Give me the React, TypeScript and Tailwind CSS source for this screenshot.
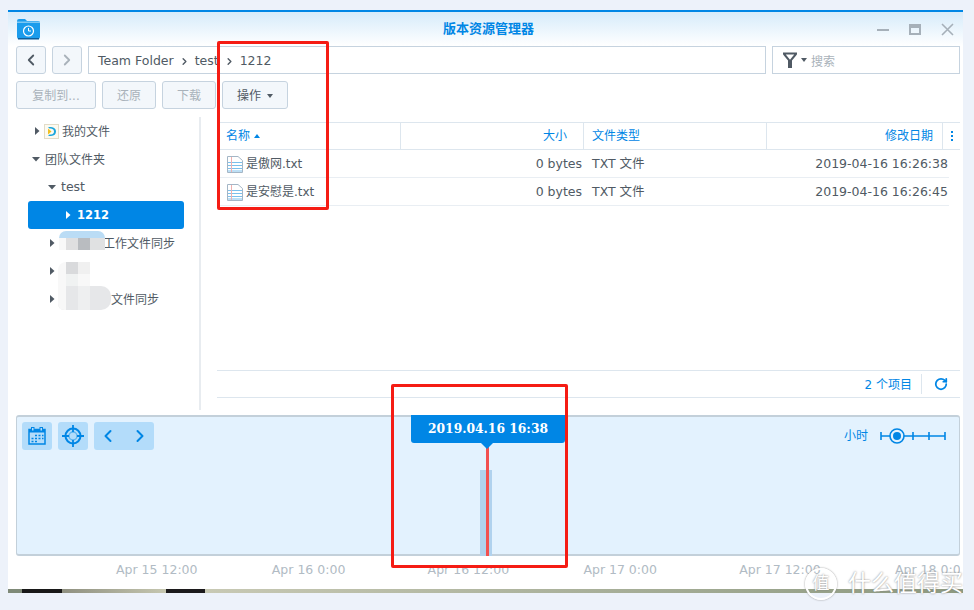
import { ChevronLeft, ChevronRight, RotateCw } from "lucide-react";

const cjk = "font-['DejaVu_Sans','Noto_Sans_CJK_SC',sans-serif]";

function Caret({ dir, white }: { dir: "right" | "down"; white?: boolean }) {
    const color = white ? "#ffffff" : "#505a64";
    return (
        <svg width="8" height="10" viewBox="0 0 8 10" className="shrink-0">
            {dir === "right" ? <path d="M2 1 L6.5 5 L2 9 Z" fill={color} /> : <path d="M0 3 L8 3 L4 7.5 Z" fill={color} />}
        </svg>
    );
}

function TreeRow({ indent, caret, label, selected }: { indent: string; caret: "right" | "down"; label?: React.ReactNode; selected?: boolean }) {
    return (
        <div className={`h-7 flex items-center gap-[5px] rounded-[3px] ml-5 mr-[15px] ${indent} ${selected ? "bg-[#0086e5] text-white font-bold text-[11.5px]" : "text-[#505a64] text-[12px]"}`}>
            <Caret dir={caret} white={selected} />
            {label}
        </div>
    );
}

function TxtIcon() {
    return (
        <svg width="16" height="17" viewBox="0 0 16 17" className="shrink-0">
            <path d="M0.5 0.5 H11 L15.5 4.5 V16.5 H0.5 Z" fill="#ffffff" stroke="#a4b6c6" />
            <path d="M1 6.5 H15 M1 9.5 H15 M1 12.5 H15 M1 15 H15" stroke="#7cc0ec" />
            <path d="M4.5 1 V16" stroke="#efb0b0" />
        </svg>
    );
}

function FileRow({ name, date }: { name: string; date: string }) {
    return (
        <div className="h-7 mr-[11px] pt-px flex items-center border-b border-[#e9eef3] text-[12.5px] text-[#505a64]">
            <div className="w-[184px] pl-[10px] flex items-center gap-[3px] text-[12px]">
                <TxtIcon />
                {name}
            </div>
            <div className="w-[181px] text-right">0 bytes</div>
            <div className="w-[176px] pl-[10px]">TXT 文件</div>
            <div className="flex-1 text-right pr-px">{date}</div>
        </div>
    );
}

function ToolBtn({ label, width, on }: { label: string; width: string; on?: boolean }) {
    return (
        <button className={`h-7 pt-px rounded-[3px] border border-[#c6d3df] bg-[#f3f7fb] text-[12px] ${width} ${on ? "text-[#505a64]" : "text-[#a9b2ba]"}`}>
            {label}
            {on && <span className="inline-block ml-[6px] align-middle border-x-[3.5px] border-t-[4px] border-x-transparent border-t-[#505a64]" />}
        </button>
    );
}

function Cell({ className }: { className: string }) {
    return <div className={`absolute ${className}`} />;
}

const axis = ["Apr 15 12:00", "Apr 16 0:00", "Apr 16 12:00", "Apr 17 0:00", "Apr 17 12:00", "Apr 18 0:00"];

export default function App() {
    return (
        <div className={`relative w-[974px] h-[610px] overflow-hidden bg-[#edf2fa] pt-[10px] pl-[8px] ${cjk}`}>
            <div className="w-[955px] h-[579px] bg-white border-t-2 border-[#0086e5] flex flex-col">
                {/* title bar */}
                <div className="h-[34px] shrink-0 -mb-[34px] bg-gradient-to-b from-[#d6ebfa] to-white" />
                <div className="relative h-[34px] shrink-0 pl-[6px] flex items-center justify-center text-[13px] font-bold text-[#0086e5]">
                    <svg width="23" height="22" viewBox="0 0 23 22" className="absolute left-[9px] top-[6px]">
                        <path d="M0 3 Q0 1 2 1 H8 L10 3 H21 Q23 3 23 5 V19 Q23 21 21 21 H2 Q0 21 0 19 Z" fill="#1a9cec" />
                        <path d="M0 5 H23 V3.5 H0 Z" fill="#7cc8f4" />
                        <rect x="1" y="20" width="21" height="1.5" fill="#0d5f9c" />
                        <circle cx="11.5" cy="13" r="5" fill="none" stroke="#fff" strokeWidth="1.2" />
                        <path d="M11.5 10 V13 H14" fill="none" stroke="#fff" />
                    </svg>
                    版本资源管理器
                    <div className="absolute right-[9px] top-[11px] flex items-center gap-[20px]">
                        <div className="w-3 h-[2px] bg-[#a6b0b9]" />
                        <div className="w-3 h-[11px] border-2 border-t-[4px] border-[#a6b0b9]" />
                        <svg width="13" height="13" viewBox="0 0 13 13">
                            <path d="M1 1 L12 12 M12 1 L1 12" stroke="#a6b0b9" strokeWidth="1.6" />
                        </svg>
                    </div>
                </div>

                {/* path row */}
                <div className="h-7 shrink-0 ml-2 mr-[3px] flex gap-[6px]">
                    <button className="w-[30px] h-7 flex items-center justify-center rounded-[3px] border border-[#c6d3df] bg-[#f3f7fb]">
                        <ChevronLeft size={18} color="#505a64" strokeWidth={2.4} />
                    </button>
                    <button className="w-[30px] h-7 flex items-center justify-center rounded-[3px] border border-[#c6d3df] bg-[#f3f7fb]">
                        <ChevronRight size={18} color="#a9b2ba" strokeWidth={2.4} />
                    </button>
                    <div className="w-[678px] pt-[2px] flex items-center pl-[9px] gap-[5px] border border-[#c6d3df] bg-white text-[12.5px] text-[#505a64]">
                        <span>Team Folder</span>
                        <ChevronRight size={11} strokeWidth={3} />
                        <span>test</span>
                        <ChevronRight size={11} strokeWidth={3} />
                        <span>1212</span>
                    </div>
                    <div className="w-[188px] flex items-center pl-[9px] border border-[#c6d3df] text-[12px] text-[#a9b2ba]">
                        <svg width="16" height="16" viewBox="0 0 16 16">
                            <path d="M1 1.5 H15 M2 2 L7 8 V15 H9 V8 L14 2" fill="none" stroke="#505a64" strokeWidth="2" />
                        </svg>
                        <span className="ml-[3px] mr-[4px] border-x-[3px] border-t-[4px] border-x-transparent border-t-[#505a64]" />
                        <span className="pt-[3px]">搜索</span>
                    </div>
                </div>

                {/* actions */}
                <div className="h-7 shrink-0 mt-[7px] ml-2 flex gap-[6px]">
                    <ToolBtn label="复制到..." width="w-[80px]" />
                    <ToolBtn label="还原" width="w-[54px]" />
                    <ToolBtn label="下载" width="w-[54px]" />
                    <ToolBtn label="操作" width="w-[66px]" on />
                </div>

                {/* browser */}
                <div className="flex h-[293px] shrink-0 mt-2">
                    <div className="w-[193px] shrink-0 border-r-2 border-[#e8ecf0]">
                        <div className="h-7 flex items-center gap-[3px] ml-[25px] text-[12px] text-[#505a64]">
                            <Caret dir="right" />
                            <svg width="15" height="15" viewBox="0 0 15 15" className="shrink-0">
                                <rect x="0.5" y="0.5" width="14" height="14" fill="#fdfaf0" stroke="#e2dcc8" />
                                <path d="M4 3 H7 Q12 3.5 12 7.5 Q12 11.5 7 12 H4 L5.5 10.5 H7 Q10 10 10 7.5 Q10 5 7 4.5 H5.5 Z" fill="#1ba6dc" />
                                <path d="M4 4.5 L7.5 7.5 L4 10.5 Z" fill="#f0c020" />
                            </svg>
                            <span className="pt-[2px]">我的文件</span>
                        </div>
                        <TreeRow indent="pl-[4px]" caret="down" label={<span className="pt-[2px]">团队文件夹</span>} />
                        <TreeRow indent="pl-[20px]" caret="down" label={<span className="text-[12.5px]">test</span>} />
                        <TreeRow indent="pl-[36px]" caret="right" label={<span className="pt-[2px]">1212</span>} selected />
                        <TreeRow indent="pl-[20px]" caret="right" label={<span className="ml-[42px] pt-[2px] whitespace-nowrap">工作文件同步</span>} />
                        <TreeRow indent="pl-[20px]" caret="right" />
                        <TreeRow indent="pl-[20px]" caret="right" label={<span className="ml-[50px] pt-[2px] whitespace-nowrap">文件同步</span>} />
                    </div>

                    <div className="flex-1 ml-[16px] mr-[3px] pt-[5px] flex flex-col">
                        <div className="h-7 flex items-center border-y border-[#dde6ee] text-[12px] text-[#0086e5]">
                            <div className="w-[184px] pl-[9px] h-full flex items-center border-r border-[#dde6ee]">
                                名称
                                <span className="ml-[4px] border-x-[3px] border-b-[4px] border-x-transparent border-b-[#0086e5]" />
                            </div>
                            <div className="w-[183px] pr-[16px] h-full flex items-center justify-end border-r border-[#dde6ee]">大小</div>
                            <div className="w-[183px] pl-[8px] h-full flex items-center border-r border-[#dde6ee]">文件类型</div>
                            <div className="w-[176px] pr-[9px] h-full flex items-center justify-end border-r border-[#dde6ee]">修改日期</div>
                            <div className="flex-1 flex flex-col items-center gap-[2px]">
                                <span className="w-[2px] h-[2px] bg-[#0086e5]" />
                                <span className="w-[2px] h-[2px] bg-[#0086e5]" />
                                <span className="w-[2px] h-[2px] bg-[#0086e5]" />
                            </div>
                        </div>
                        <FileRow name="是傲网.txt" date="2019-04-16 16:26:38" />
                        <FileRow name="是安慰是.txt" date="2019-04-16 16:26:45" />
                        <div className="flex-1" />
                        <div className="h-7 mb-[12px] flex items-center justify-end border-y border-[#dde6ee] text-[12px] text-[#0086e5]">
                            <span className="pr-[9px] pt-[2px]">2 个项目</span>
                            <div className="h-5 border-l border-[#dde6ee] pl-[12px] pr-[12px] flex items-center">
                                <RotateCw size={14} strokeWidth={3} />
                            </div>
                        </div>
                    </div>
                </div>

                {/* timeline */}
                <div className="relative h-[141px] mt-[5px] ml-2 mr-[3px] shrink-0 rounded-[3px] bg-[#e3f2fe] border border-[#c3d0da] border-t-2 border-b-2 p-[5px] flex justify-between">
                    <div className="flex gap-[6px] h-7">
                        <div className="w-[30px] rounded-[3px] bg-[#b3dcfa] flex items-center justify-center">
                            <svg width="18" height="18" viewBox="0 0 18 18">
                                <rect x="1" y="2.5" width="16" height="14.5" fill="none" stroke="#0086e5" strokeWidth="1.5" />
                                <rect x="1" y="2.5" width="16" height="3" fill="#0086e5" />
                                <rect x="3.5" y="0.5" width="2.5" height="3.5" fill="#b3dcfa" stroke="#0086e5" />
                                <rect x="12" y="0.5" width="2.5" height="3.5" fill="#b3dcfa" stroke="#0086e5" />
                                <path d="M7 8.5 h2 M10.5 8.5 h2 M14 8.5 h1.5 M3.5 11.5 h2 M7 11.5 h2 M10.5 11.5 h2 M14 11.5 h1.5 M3.5 14.5 h2 M7 14.5 h2" stroke="#0086e5" strokeWidth="1.6" />
                            </svg>
                        </div>
                        <div className="w-[30px] rounded-[3px] bg-[#b3dcfa] flex items-center justify-center">
                            <svg width="22" height="22" viewBox="0 0 22 22">
                                <circle cx="11" cy="11" r="7.5" fill="none" stroke="#0086e5" strokeWidth="2" />
                                <circle cx="11" cy="11" r="4" fill="none" stroke="#5db4ef" strokeWidth="1.4" />
                                <path d="M11 0 V7 M11 15 V22 M0 11 H7 M15 11 H22" stroke="#0086e5" strokeWidth="1.8" />
                            </svg>
                        </div>
                        <div className="w-[60px] rounded-[3px] bg-[#b3dcfa] flex items-center justify-between px-[4px] text-[#0086e5]">
                            <ChevronLeft size={20} strokeWidth={2.4} />
                            <ChevronRight size={20} strokeWidth={2.4} />
                        </div>
                    </div>
                    <div className="flex items-start gap-[12px] pr-[8px] pt-[6px] text-[12px] text-[#0086e5]">
                        <span className="-mt-[1px]">小时</span>
                        <svg width="66" height="16" viewBox="0 0 66 16">
                            <path d="M1 8 H65 M1 4 V12 M33 4 V12 M49 4 V12 M65 4 V12" stroke="#0086e5" strokeWidth="1.6" />
                            <circle cx="17" cy="8" r="7" fill="#e3f2fe" stroke="#0086e5" strokeWidth="1.6" />
                            <circle cx="17" cy="8" r="4" fill="#0086e5" />
                        </svg>
                    </div>
                </div>

                {/* axis labels */}
                <div className="flex-1 mr-[3px] overflow-hidden">
                    <div className="flex pl-[108px] pt-[5px] whitespace-nowrap text-[12.5px] text-[#b1bbc4]">
                        {axis.map((t) => (
                            <div key={t} className="w-[155.8px] shrink-0">{t}</div>
                        ))}
                    </div>
                </div>
            </div>

            {/* strip of the photo behind the window */}
            <div className="w-[955px] h-1 flex">
                <div className="w-[14px] bg-[#7f8a78]" />
                <div className="w-[40px] bg-[#181818]" />
                <div className="w-[104px] bg-gradient-to-r from-[#8f9080] to-[#c6c7b0]" />
                <div className="w-[39px] bg-[#1c1a1c]" />
                <div className="flex-1 bg-gradient-to-r from-[#c8c9b4] via-[#a9b09a] to-[#8d9a80]" />
            </div>

            {/* time marker over the chart */}
            <div className="absolute left-[480px] top-[470px] w-3 h-[86px] bg-[#b0d2ee]" />
            <div className="absolute left-[486px] top-[447px] w-[3px] h-[109px] bg-[#f25050]" />
            <div className="absolute left-[411px] top-[415px] w-[154px] h-7 rounded-b-[3px] bg-[#0086e5] flex items-center justify-center text-[12.3px] font-bold text-white font-['DejaVu_Serif',serif]">
                2019.04.16 16:38
            </div>
            <div className="absolute left-[481px] top-[443px] border-x-[6px] border-t-[6px] border-x-transparent border-t-[#0086e5]" />

            {/* mosaic hiding the folder names */}
            <Cell className="left-[59px] top-[231px] w-[46px] h-[7px] rounded-t-[8px] bg-[#badcf5]" />
            <Cell className="left-[59px] top-[238px] w-[7px] h-[12px] bg-[#f8f8f8]" />
            <Cell className="left-[66px] top-[238px] w-[12px] h-[12px] bg-[#dfdfe0]" />
            <Cell className="left-[78px] top-[238px] w-[12px] h-[12px] bg-[#b9bcc0]" />
            <Cell className="left-[90px] top-[238px] w-[15px] h-[12px] bg-[#e0e1e2]" />
            <Cell className="left-[58px] top-[262px] w-[32px] h-[24px] rounded-tl-[8px] rounded-tr-[6px] bg-[#f8f8f8]" />
            <Cell className="left-[66px] top-[262px] w-[12px] h-[12px] bg-[#d9dadc]" />
            <Cell className="left-[78px] top-[262px] w-[12px] h-[12px] bg-[#f0f0f0]" />
            <Cell className="left-[66px] top-[274px] w-[12px] h-[12px] bg-[#f0f2f2]" />
            <Cell className="left-[58px] top-[286px] w-[53px] h-[24px] rounded-r-[10px] rounded-bl-[6px] bg-[#e6e7e9]" />
            <Cell className="left-[58px] top-[286px] w-[8px] h-[24px] rounded-bl-[6px] bg-[#f8f8f8]" />
            <Cell className="left-[78px] top-[286px] w-[12px] h-[24px] bg-[#eeeff0]" />

            {/* annotation frames */}
            <div className="absolute left-[217px] top-[41px] w-[112px] h-[169px] rounded-[2px] border-[3px] border-[#f51c14]" />
            <div className="absolute left-[391px] top-[384px] w-[177px] h-[184px] rounded-[2px] border-[3px] border-[#f51c14]" />

            {/* site watermark */}
            <div className="absolute left-[805px] top-[568px] w-[32px] h-[32px] rounded-full border-2 border-white shadow-[0_0_2px_#8a8a8a] flex items-center justify-center text-[17px] text-white [text-shadow:0_0_2px_#7a7a7a]">值</div>
            <div className="absolute left-[848px] top-[568px] text-[23px] leading-[30px] whitespace-nowrap text-white [text-shadow:0_0_2px_#7a7a7a]">什么值得买</div>
        </div>
    );
}
